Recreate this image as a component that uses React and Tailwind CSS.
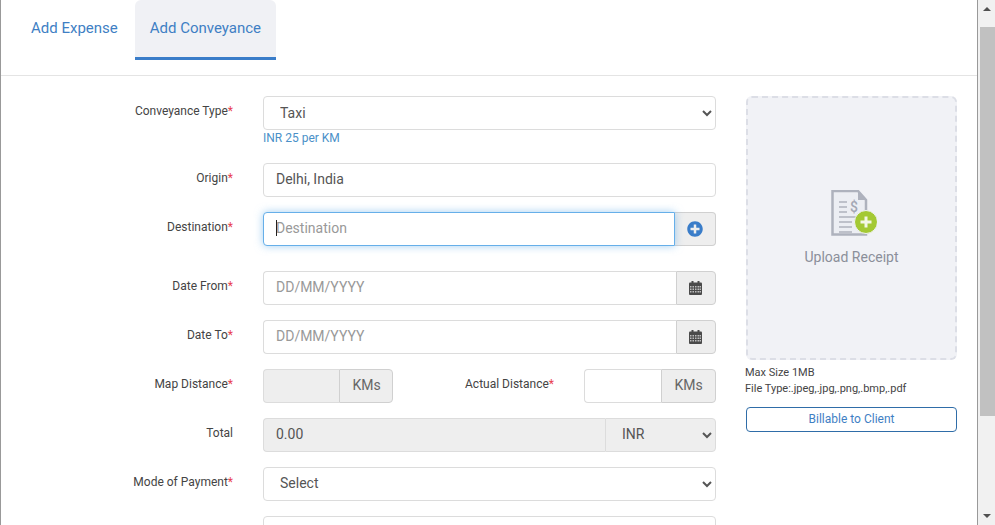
import { FaPlusCircle } from "react-icons/fa";

const inputCls = "h-[34px] min-w-0 rounded-[4px] border border-[#dcdcdc] px-3 text-[14px] text-[#555] placeholder:text-[#999] outline-none";
const textCls = `${inputCls} pb-[2px]`;
const addonCls = "flex h-[34px] shrink-0 items-center justify-center rounded-r-[4px] border border-[#d0d0d0] bg-[#eee] text-[14px] text-[#666]";

const Label = ({ children, required, className = "w-[232px]" }) => (
    <div className={`${className} shrink-0 pt-[7px] text-right text-[12px] leading-[17px] text-[#444]`}>
        {children}
        {required && <span className="text-[#e8404f]">*</span>}
    </div>
);

const CalendarIcon = () => (
    <svg width="13" height="14" viewBox="0 0 13 14">
        <rect x="0" y="1.5" width="13" height="12.5" rx="1" fill="#4a4a4a" />
        <rect x="2.5" y="0" width="2" height="3" fill="#4a4a4a" />
        <rect x="8.5" y="0" width="2" height="3" fill="#4a4a4a" />
        {[5, 7.5, 10].map((y) =>
            [1, 3.5, 6, 8.5, 10.5].map((x) => (
                <rect key={`${x}-${y}`} x={x} y={y} width="1.5" height="1.5" fill="#bdbdbd" />
            ))
        )}
    </svg>
);

const ReceiptIcon = () => (
    <svg width="46" height="46" viewBox="0 0 46 46">
        <path d="M1.5 1H27L35 10V44.5H1.5Z" fill="#eceef3" stroke="#aeb2bd" strokeWidth="2.5" />
        <path d="M27 1V10H35Z" fill="#aeb2bd" />
        <g stroke="#aeb2bd" strokeWidth="1.4">
            <path d="M8 12H16M8 17H16M8 22H16M8 27H28M8 32H21M8 37H21M8 42H21" />
        </g>
        <text x="23" y="22" fontSize="14" textAnchor="middle" fontFamily="Roboto, sans-serif" fontWeight="500" fill="#a3a7b3">$</text>
        <circle cx="35" cy="32" r="11.5" fill="#a4c934" stroke="#f1f2f6" strokeWidth="1" />
        <path d="M35 26.5V37.5M29.5 32H40.5" stroke="#f4f7e6" strokeWidth="3" />
    </svg>
);

const DateRow = ({ label, className }) => (
    <div className={`flex ${className}`}>
        <Label required>{label}</Label>
        <div className="ml-[30px] flex w-[453px]">
            <input className={`${textCls} flex-1 rounded-r-none border-r-0 bg-white`} placeholder="DD/MM/YYYY" />
            <div className={`${addonCls} w-[40px] pr-[2px]`}>
                <CalendarIcon />
            </div>
        </div>
    </div>
);

export default function App() {
    return (
        <div className="flex h-screen w-full overflow-hidden bg-white font-['Roboto',sans-serif]">
            <div className="min-w-0 flex-1 border-l border-[#999]">
                {/* Tabs */}
                <div className="flex h-[76px] border-b border-[#e4e4e4] pl-[15px] text-[15px] leading-[20px] text-[#3f7fc4]">
                    <div className="flex h-[60px] items-center px-[15px] pb-[4px]">Add Expense</div>
                    <div className="ml-[2px] flex h-[60px] items-center rounded-t-[6px] border-b-[3px] border-[#3a7dc9] bg-[#f0f1f5] px-[15px] pb-[1px]">
                        Add Conveyance
                    </div>
                </div>

                <div className="flex pt-[20px]">
                    {/* Form */}
                    <div className="w-[715px] shrink-0">
                        <div className="flex">
                            <Label required>Conveyance Type</Label>
                            <div className="ml-[30px] w-[453px]">
                                <select className={`${inputCls} w-full bg-white`} defaultValue="Taxi">
                                    <option>Taxi</option>
                                </select>
                                <div className="h-[33px] text-[12px] leading-[16px] text-[#4a90c8]">INR 25 per KM</div>
                            </div>
                        </div>

                        <div className="flex">
                            <Label required>Origin</Label>
                            <input className={`${textCls} ml-[30px] w-[453px] bg-white`} defaultValue="Delhi, India" />
                        </div>

                        <div className="mt-[15px] flex">
                            <Label required>Destination</Label>
                            <div className="ml-[30px] flex w-[453px]">
                                <div className="relative flex min-w-0 flex-1">
                                    <input
                                        className="h-[34px] min-w-0 flex-1 rounded-l-[4px] border border-[#66afe9] bg-white px-3 pb-[2px] text-[14px] text-[#555] shadow-[0_0_8px_rgba(102,175,233,0.6)] outline-none placeholder:text-[#999]"
                                        placeholder="Destination"
                                    />
                                    {/* text caret */}
                                    <div className="absolute left-[13px] top-[8px] h-[16px] w-px bg-[#222]" />
                                </div>
                                <div className={`${addonCls} w-[41px] border-l-0 pb-[1px]`}>
                                    <FaPlusCircle className="text-[16px] text-[#3a7dc9]" />
                                </div>
                            </div>
                        </div>

                        <DateRow label="Date From" className="mt-[25px]" />
                        <DateRow label="Date To" className="mt-[15px]" />

                        <div className="mt-[15px] flex">
                            <Label required>Map Distance</Label>
                            <div className="ml-[30px] flex w-[130px]">
                                <input disabled className={`${textCls} w-[76px] rounded-r-none border-r-0 bg-[#eee]`} />
                                <div className={`${addonCls} w-[54px] pb-[2px] pl-[1px]`}>KMs</div>
                            </div>
                            <Label required className="w-[161px]">Actual Distance</Label>
                            <div className="ml-[30px] flex w-[132px]">
                                <input className={`${textCls} w-[77px] rounded-r-none border-r-0 bg-white`} />
                                <div className={`${addonCls} w-[55px] pb-[2px]`}>KMs</div>
                            </div>
                        </div>

                        <div className="mt-[15px] flex">
                            <Label>Total</Label>
                            <div className="ml-[30px] flex w-[453px]">
                                <input disabled className={`${textCls} w-[342px] rounded-r-none border-r-0 bg-[#eee]`} defaultValue="0.00" />
                                <select className={`${textCls} w-[111px] rounded-l-none bg-[#eee]`} defaultValue="INR">
                                    <option>INR</option>
                                </select>
                            </div>
                        </div>

                        <div className="mt-[15px] flex">
                            <Label required>Mode of Payment</Label>
                            <select className={`${textCls} ml-[30px] w-[453px] bg-white`} defaultValue="Select">
                                <option>Select</option>
                            </select>
                        </div>

                        <div className="mt-[15px] flex">
                            <div className="w-[232px] shrink-0" />
                            <input className={`${inputCls} ml-[30px] w-[453px] bg-white`} />
                        </div>
                    </div>

                    {/* Receipt column */}
                    <div className="ml-[30px] w-[211px] shrink-0">
                        <div className="flex h-[264px] flex-col items-center justify-center rounded-[6px] border-2 border-dashed border-[#dcdee6] bg-[#f1f2f6] pl-[5px]">
                            <ReceiptIcon />
                            <div className="mt-[12px] -ml-[5px] text-[14px] leading-[18px] text-[#8b8f9a]">Upload Receipt</div>
                        </div>
                        <div className="mt-[5px] -ml-px text-[11px] leading-[16px] text-[#444]">
                            <div>Max Size 1MB</div>
                            <div>File Type:.jpeg,.jpg,.png,.bmp,.pdf</div>
                        </div>
                        <div className="mt-[10px] flex h-[25px] items-center justify-center rounded-[4px] border border-[#2f6da8] pb-[2px] text-[12px] text-[#3f7fc4]">
                            Billable to Client
                        </div>
                    </div>
                </div>
            </div>

            {/* Browser scrollbar */}
            <div className="flex w-[18px] shrink-0 flex-col border-l border-[#999] bg-[#f1f1f1]">
                <div className="flex h-[27px] items-center justify-center pb-[9px]">
                    <div className="h-0 w-0 border-x-[4px] border-b-[4px] border-x-transparent border-b-[#505050]" />
                </div>
                <div className="ml-[2px] h-[389px] bg-[#c1c1c1]" />
                <div className="mt-auto flex h-[18px] items-center justify-center">
                    <div className="h-0 w-0 border-x-[4px] border-t-[4px] border-x-transparent border-t-[#505050]" />
                </div>
            </div>
        </div>
    );
}
